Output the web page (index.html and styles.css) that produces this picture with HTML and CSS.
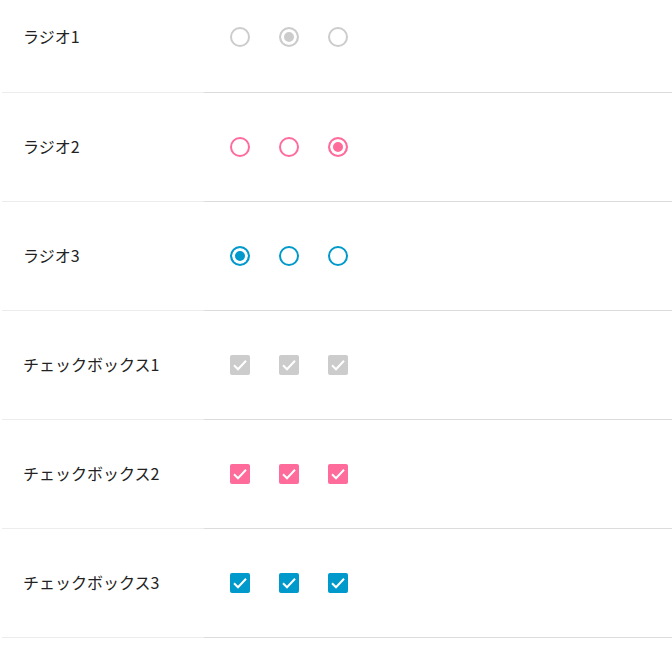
FILE: index.html
```html
<!DOCTYPE html>
<html>
<head>
<meta charset="utf-8"/>
<title>フォーム部品</title>
<link rel="stylesheet" href="styles.css">
</head>
<body>
<table class="form-table">
<tr>
<th>ラジオ1</th>
<td>
<span class="radio gray"></span>
<span class="radio gray checked"></span>
<span class="radio gray"></span>
</td>
</tr>
<tr>
<th>ラジオ2</th>
<td>
<span class="radio pink"></span>
<span class="radio pink"></span>
<span class="radio pink checked"></span>
</td>
</tr>
<tr>
<th>ラジオ3</th>
<td>
<span class="radio blue checked"></span>
<span class="radio blue"></span>
<span class="radio blue"></span>
</td>
</tr>
<tr>
<th>チェックボックス1</th>
<td>
<span class="check gray"><svg viewBox="0 0 20 20"><path d="M4 10.3l4 4L16 5.8"/></svg></span>
<span class="check gray"><svg viewBox="0 0 20 20"><path d="M4 10.3l4 4L16 5.8"/></svg></span>
<span class="check gray"><svg viewBox="0 0 20 20"><path d="M4 10.3l4 4L16 5.8"/></svg></span>
</td>
</tr>
<tr>
<th>チェックボックス2</th>
<td>
<span class="check pink"><svg viewBox="0 0 20 20"><path d="M4 10.3l4 4L16 5.8"/></svg></span>
<span class="check pink"><svg viewBox="0 0 20 20"><path d="M4 10.3l4 4L16 5.8"/></svg></span>
<span class="check pink"><svg viewBox="0 0 20 20"><path d="M4 10.3l4 4L16 5.8"/></svg></span>
</td>
</tr>
<tr>
<th>チェックボックス3</th>
<td>
<span class="check blue"><svg viewBox="0 0 20 20"><path d="M4 10.3l4 4L16 5.8"/></svg></span>
<span class="check blue"><svg viewBox="0 0 20 20"><path d="M4 10.3l4 4L16 5.8"/></svg></span>
<span class="check blue"><svg viewBox="0 0 20 20"><path d="M4 10.3l4 4L16 5.8"/></svg></span>
</td>
</tr>
</table>
</body>
</html>
```

FILE: styles.css
```css
body {
   margin: 0;
   background-color: white;
   font-family: "Noto Sans CJK JP", "Noto Sans", sans-serif;
   font-size: 16px;
   color: #222;
}

.form-table {
   border-collapse: collapse;
   margin: -17px 0 0 2px;
   width: 670px;
}

.form-table tr {
   height: 109px;
}

.form-table th {
   width: 181px;
   padding: 0 0 2px 21px;
   text-align: left;
   font-weight: normal;
   border-bottom: 1px solid #ececec;
}

.form-table td {
   padding: 0 0 0 26px;
   border-bottom: 1px solid #dcdcdc;
   font-size: 0;
   vertical-align: middle;
}

.radio, .check {
   display: inline-block;
   box-sizing: border-box;
   width: 20px;
   height: 20px;
   margin-right: 29px;
   vertical-align: middle;
}

.radio {
   border: 2px solid;
   border-radius: 50%;
   background: white;
}

.radio.checked {
   box-shadow: inset 0 0 0 3px white;
}

.radio.gray { border-color: #cccccc; }
.radio.pink { border-color: #ff6b9b; }
.radio.blue { border-color: #0099cc; }

.radio.gray.checked { background: #cccccc; }
.radio.pink.checked { background: #ff6b9b; }
.radio.blue.checked { background: #0099cc; }

.check {
   border-radius: 2px;
}

.check svg {
   display: block;
   width: 20px;
   height: 20px;
   fill: none;
   stroke: white;
   stroke-width: 2;
}

.check.gray { background: #cccccc; }
.check.pink { background: #ff6b9b; }
.check.blue { background: #0099cc; }
```
